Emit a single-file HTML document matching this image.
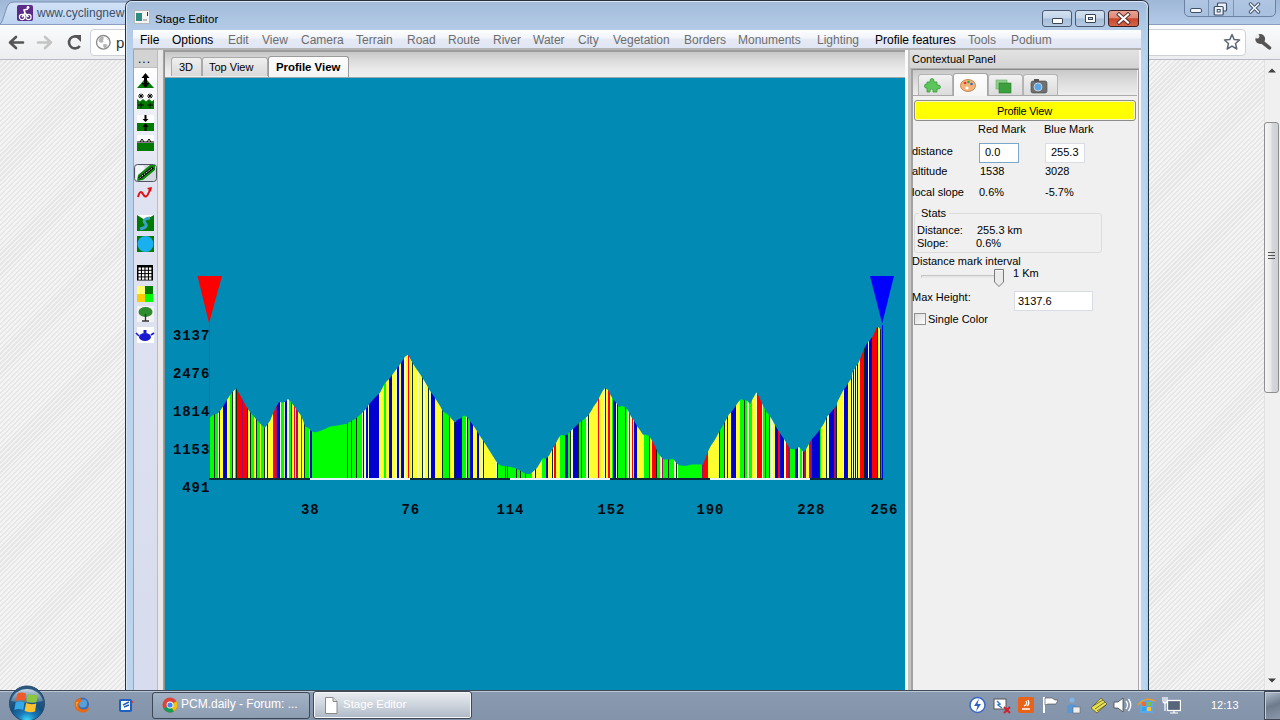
<!DOCTYPE html>
<html><head><meta charset="utf-8">
<style>
*{margin:0;padding:0;box-sizing:border-box}
html,body{width:1280px;height:720px;overflow:hidden;font-family:"Liberation Sans",sans-serif;font-size:12px;color:#000;background:#fff}
.a{position:absolute}
.t{position:absolute;white-space:nowrap;line-height:14px}
/* chrome */
#tabstrip{left:0;top:0;width:1280px;height:25px;background:linear-gradient(#9fb7d6,#b4cbe8)}
#toolbar{left:0;top:24px;width:1280px;height:36px;background:linear-gradient(#fafbfc,#ebedf0);border-top:1px solid #8a9dba;border-bottom:1px solid #b8bcc2}
#content{left:0;top:60px;width:1264px;height:630px;background:repeating-linear-gradient(-45deg,#e6e6e6 0 1.6px,#f4f4f4 1.6px 3.5px)}
#scroll{left:1264px;top:60px;width:16px;height:630px;background:#f0f0f0;border-left:1px solid #e2e2e2}
#omni{left:90px;top:29px;width:1156px;height:27px;background:#fff;border:1px solid #cdd2d8;border-radius:4px}
#taskbar{left:0;top:690px;width:1280px;height:30px;background:linear-gradient(#8a9bb1,#8393a9);border-top:1px solid #404c5c;box-shadow:inset 0 1px 0 #bac6d4}
.tb{position:absolute;top:692px;height:27px;border:1px solid #3d4654;border-radius:3px;background:linear-gradient(#a3b2c5,#8c9cb1)}
.tbt{position:absolute;top:697px;color:#fff;font-size:12px;line-height:14px;white-space:nowrap}
/* window */
#win{left:125px;top:0;width:1024px;height:690px;background:linear-gradient(#a2bbd9 0,#b3cbe7 28px,#bcd3ee 60px,#bdd4ee 100%);border:1px solid #28303c;border-bottom:none;border-radius:7px 7px 0 0}
#winin{left:126px;top:1px;width:1022px;height:689px;border:1px solid #d9e6f5;border-bottom:none;border-radius:6px 6px 0 0}
#menubar{left:133px;top:30px;width:1008px;height:18px;background:linear-gradient(#fcfdfe 0,#f1f4fa 45%,#e5eaf5 50%,#e0e6f3 100%)}
.m{position:absolute;top:33px;line-height:14px;color:#6d6d6d;white-space:nowrap}
.m.e{color:#000}
.wb{position:absolute;top:10px;width:30px;height:17px;border:1px solid #4b5a72;border-radius:3px;background:linear-gradient(#d3e1f1 0,#c3d5ea 48%,#a5bdd9 52%,#b6cbe4 100%)}
#client{left:133px;top:48px;width:1008px;height:642px;background:#f0f0f0;border-top:2px solid #b4b4b4}
.p{font-size:11px}
.cb{position:absolute;border:1px solid #abadb3;background:#fff}
</style></head>
<body>
<!-- ============ CHROME BROWSER BEHIND ============ -->
<div id="tabstrip" class="a"></div>
<svg class="a" style="left:0;top:0" width="160" height="26" viewBox="0 0 160 26"><defs><linearGradient id="tg" x1="0" y1="0" x2="0" y2="1"><stop offset="0" stop-color="#d2e2f7"/><stop offset="1" stop-color="#bcd3f0"/></linearGradient></defs><path d="M-1 25 L1 23 C3 21 6 8 8 5 Q10 2 14 2 L160 2 L160 25 Z" fill="url(#tg)" stroke="#7a90ae" stroke-width="1"/></svg>
<div class="a" style="left:17px;top:5px;width:16px;height:16px;background:#5c2b8a;border-radius:2px"></div>
<svg class="a" style="left:17px;top:5px" width="16" height="16" viewBox="0 0 16 16"><circle cx="5" cy="12" r="2.6" fill="none" stroke="#fff" stroke-width="1.2"/><circle cx="11.5" cy="12" r="2.6" fill="none" stroke="#fff" stroke-width="1.2"/><path d="M5 12 L8 8 L11.5 12 M8 8 L7 5 L11 4" stroke="#fff" stroke-width="1.6" fill="none"/><circle cx="11" cy="2.5" r="1.4" fill="#fff"/></svg>
<div class="t" style="left:37px;top:6px;color:#3d4f6a;font-size:12px">www.cyclingnew</div>
<div id="toolbar" class="a"></div>
<svg class="a" style="left:8px;top:34px" width="80" height="18" viewBox="0 0 80 18">
 <path d="M2 8.5 L8 3 M2 8.5 L8 14 M2 8.5 H15" stroke="#555" stroke-width="2.6" fill="none" stroke-linecap="round"/>
 <path d="M43 8.5 L37 3 M43 8.5 L37 14 M43 8.5 H30" stroke="#c4c4c4" stroke-width="2.6" fill="none" stroke-linecap="round"/>
 <path d="M70.5 3.5 A6 6 0 1 0 71.8 12" stroke="#555" stroke-width="2.6" fill="none"/><path d="M66 1 L73 1 L73 8 Z" fill="#555"/>
</svg>
<div id="omni" class="a"></div>
<svg class="a" style="left:95px;top:34px" width="17" height="17" viewBox="0 0 17 17"><circle cx="8.3" cy="8.3" r="6.8" fill="#fff" stroke="#8c8c8c" stroke-width="1.4"/><path d="M3.5 6 Q4.5 3 7.5 2.6 Q9.5 3 8.6 5 Q7.5 6 8.5 7.5 Q7 9.5 5 8.5 Q3.8 7.5 3.5 6 Z" fill="#b4b4b4"/><path d="M8 10.5 Q10.5 9.5 12.5 11 Q12 13.5 9.5 14.6 Q8 13 8 10.5 Z" fill="#b4b4b4"/><path d="M11 3.5 Q13 4.5 13.8 7 Q12.5 6.5 11 3.5 Z" fill="#c4c4c4"/></svg>
<div class="t" style="left:116px;top:36px;font-size:15px;color:#333">p</div>
<svg class="a" style="left:1223px;top:33px" width="18" height="18" viewBox="0 0 18 18"><path d="M9 1.5 L11.2 6.6 L16.6 7 L12.5 10.5 L13.8 16 L9 13.1 L4.2 16 L5.5 10.5 L1.4 7 L6.8 6.6 Z" fill="#fff" stroke="#5d6775" stroke-width="1.5" stroke-linejoin="round"/></svg>
<svg class="a" style="left:1250px;top:30px" width="26" height="24" viewBox="0 0 26 24"><path d="M11.5 11.5 L19.5 17.8" stroke="#555" stroke-width="3.6" stroke-linecap="round"/><circle cx="10.2" cy="9" r="4.9" fill="#555"/><path d="M4.5 8.2 L8.3 8.6 L9.6 6.2 L7.8 3 Z" fill="#efefef"/></svg>
<div class="a" style="left:1184px;top:-3px;width:92px;height:20px;border:1px solid #6b82a4;border-radius:0 0 5px 5px;background:linear-gradient(#b0c6e3,#a9c0de)"></div>
<div class="a" style="left:1208px;top:0;width:1px;height:16px;background:#7d93b3"></div>
<div class="a" style="left:1233px;top:0;width:1px;height:16px;background:#7d93b3"></div>
<div class="a" style="left:1190px;top:8px;width:12px;height:5px;background:#f4f7fb;border:1px solid #3e4f69;border-radius:2px"></div>
<svg class="a" style="left:1213px;top:2px" width="15" height="14" viewBox="0 0 15 14"><rect x="4.5" y="1" width="9" height="8" rx="1" fill="#eef3f9" stroke="#3e4f69" stroke-width="1.2"/><rect x="1.2" y="4.5" width="9" height="8.5" rx="1" fill="#eef3f9" stroke="#3e4f69" stroke-width="1.2"/><rect x="4.2" y="7.5" width="3" height="2.5" fill="none" stroke="#3e4f69" stroke-width="1"/></svg>
<svg class="a" style="left:1248px;top:2px" width="13" height="12" viewBox="0 0 13 12"><path d="M2.5 2 L10.5 10 M10.5 2 L2.5 10" stroke="#3e4f69" stroke-width="3.4" stroke-linecap="round"/><path d="M2.5 2 L10.5 10 M10.5 2 L2.5 10" stroke="#f4f7fb" stroke-width="1.7" stroke-linecap="round"/></svg>
<div id="content" class="a"></div>
<div id="scroll" class="a"></div>
<svg class="a" style="left:1265px;top:66px" width="14" height="8" viewBox="0 0 14 8"><path d="M3 6.5 L7 2.5 L11 6.5 Z" fill="#404040"/></svg>
<svg class="a" style="left:1265px;top:677px" width="14" height="8" viewBox="0 0 14 8"><path d="M3 1.5 L7 5.5 L11 1.5 Z" fill="#404040"/></svg>
<div class="a" style="left:1264px;top:122px;width:15px;height:271px;border:1px solid #8d8e90;border-radius:3px;background:linear-gradient(90deg,#f6f6f6,#e9e9ea 45%,#d6d7da 55%,#cfd0d3)"></div>
<div class="a" style="left:1268px;top:252px;width:7px;height:1px;background:#555;box-shadow:0 3px 0 #555,0 6px 0 #555"></div>

<!-- ============ TASKBAR ============ -->
<div id="taskbar" class="a"></div>
<svg class="a" style="left:8px;top:684px" width="40" height="38" viewBox="0 0 40 38">
 <defs><radialGradient id="orb" cx="0.5" cy="1" r="0.75"><stop offset="0" stop-color="#3ee0ff"/><stop offset="0.35" stop-color="#1a78b8"/><stop offset="0.7" stop-color="#14507e"/><stop offset="1" stop-color="#2a5a82"/></radialGradient>
 <linearGradient id="gl" x1="0" y1="0" x2="0" y2="1"><stop offset="0" stop-color="#e6eef5" stop-opacity="0.85"/><stop offset="1" stop-color="#9ab6cc" stop-opacity="0.35"/></linearGradient></defs>
 <circle cx="19" cy="19.5" r="17.5" fill="url(#orb)" stroke="#27486c" stroke-width="1"/>
 <path d="M3 17 A16.5 16 0 0 1 35 17 Q19 21 3 17 Z" fill="url(#gl)"/>
 <path d="M9 10 Q13 7.5 18 9.5 L16.8 17 Q12.5 15 8 17 Z" fill="#ee5a2a"/>
 <path d="M19.5 10 Q24 12 30 10 L28.5 18 Q23.5 19.5 18.3 17.5 Z" fill="#8cc63e"/>
 <path d="M7.6 18.5 Q12 16.5 16.5 18.5 L15.2 26 Q10.5 24 6.3 26 Z" fill="#35a8e8"/>
 <path d="M18 19 Q23 21 28.3 19.5 L27 27.5 Q21.5 29 16.6 27 Z" fill="#fcc22e"/>
</svg>
<svg class="a" style="left:72px;top:696px" width="19" height="18" viewBox="0 0 19 18"><circle cx="10" cy="8.5" r="7" fill="#3a6fb8"/><circle cx="11" cy="7.5" r="4" fill="#5aa0d8"/><path d="M3 5 Q1.5 11 5 14.5 Q9 17.5 13.5 16 Q17 14.5 17.5 11 Q15 14 10.5 13.5 Q6 12.5 6.5 8 Q7.5 5.5 10 5.5 Q8 3.5 9 1.5 Q5 2.5 3 5 Z" fill="#e86a12"/><path d="M4 6 Q3.5 10 6 13 Q4 9 6.5 6 Z" fill="#f7a530"/></svg>
<svg class="a" style="left:118px;top:697px" width="16" height="16" viewBox="0 0 16 16"><rect x="1" y="2" width="13" height="13" rx="2" fill="#1f5fbf"/><rect x="3" y="4" width="9" height="9" fill="#fff"/><path d="M5 8 L11 5 M6 10 L11 8" stroke="#1f5fbf" stroke-width="1.5"/><circle cx="14.5" cy="5" r="1" fill="#e33"/></svg>
<div class="tb" style="left:152px;width:158px"></div>
<svg class="a" style="left:162px;top:697px" width="16" height="16" viewBox="0 0 16 16"><circle cx="8" cy="8" r="7.5" fill="#db4437"/><path d="M8 8 L1.5 11.8 A7.5 7.5 0 0 0 12 14.3 Z" fill="#0f9d58"/><path d="M8 8 L12 14.3 A7.5 7.5 0 0 0 14.5 4.2 Z" fill="#f4c20d"/><circle cx="8" cy="8" r="3.4" fill="#fff"/><circle cx="8" cy="8" r="2.6" fill="#4285f4"/></svg>
<div class="tbt" style="left:181px">PCM.daily - Forum: ...</div>
<div class="tb" style="left:313px;top:691px;width:159px;height:28px;background:linear-gradient(#e9ecf0,#cdd4dd 50%,#aeb8c6);border-color:#3f4856;box-shadow:inset 0 0 0 1px #f4f6f8"></div>
<svg class="a" style="left:324px;top:697px" width="14" height="17" viewBox="0 0 14 17"><path d="M1.5 0.5 H9 L13 4.5 V16.5 H1.5 Z" fill="#fff" stroke="#8a8a8a"/><path d="M9 0.5 V4.5 H13" fill="#ddd" stroke="#8a8a8a"/></svg>
<div class="tbt" style="left:343px;font-size:11.5px">Stage Editor</div>
<!-- tray -->
<svg class="a" style="left:969px;top:696px" width="212" height="18" viewBox="0 0 212 18">
 <circle cx="8.5" cy="9" r="7.5" fill="#fff" stroke="#3a66c4" stroke-width="1.5"/><path d="M10 2.5 L5 10 H8.5 L7 15.5 L12 8 H8.5 Z" fill="#2f5fbf"/>
 <rect x="25" y="3" width="12" height="10" fill="#fff" stroke="#555"/><path d="M28 5 L31 8 L29 9 L33 12" stroke="#3b7bd6" stroke-width="1.5" fill="none"/><path d="M35 11 L41 17 M41 11 L35 17" stroke="#d0202a" stroke-width="2"/>
 <rect x="49" y="1" width="16" height="16" rx="2" fill="#e8621a"/><path d="M53 13 H61 M55 10 Q59 8 57 5 M58 10 Q61 8 59 4" stroke="#fff" stroke-width="1.3" fill="none"/>
 <path d="M75 1 V17" stroke="#fff" stroke-width="2"/><path d="M76 2 H83 L86 4 H89 L87 8 H79 L76 9 Z" fill="#fff" stroke="#444" stroke-width="0.6"/>
 <circle cx="103" cy="4" r="2.5" fill="#7fb6e8"/><path d="M98 17 V10 Q103 6 108 10 V17 Z" fill="#5b97d4"/><rect x="104" y="11" width="7" height="6" fill="#eee" stroke="#666" stroke-width="0.6"/>
 <path d="M122 12 L132 2 L138 8 L128 17 Z" fill="#e9e14a" stroke="#555" stroke-width="0.8"/><path d="M124 10 L134 4 M126 13 L136 6 M128 15 L137 9" stroke="#444" stroke-width="0.7"/>
 <path d="M145 6 H149 L154 2 V16 L149 12 H145 Z" fill="#fff" stroke="#444" stroke-width="0.8"/><path d="M157 5 Q160 9 157 13 M159.5 3 Q164 9 159.5 15" stroke="#fff" stroke-width="1.3" fill="none"/>
 <rect x="171" y="3" width="13" height="14" fill="#5fa8e8"/><path d="M173 6 H177 V10 H173 Z" fill="#f06a2a"/><path d="M178 6 H182 V10 H178 Z" fill="#7cc142"/><path d="M173 11 H177 V15 H173 Z" fill="#2fa6e8"/><path d="M178 11 H182 V15 H178 Z" fill="#fec02e"/><path d="M169 9 Q176 0 186 5" stroke="#f39a1e" stroke-width="1.5" fill="none"/>
 <rect x="198.5" y="4.5" width="13" height="10" fill="#56657a" stroke="#fff" stroke-width="1.3"/><path d="M201 17 H209 M205 14.5 V17 M196 1 V15 M194 1 V5 Q194 7 196 7 Q198 7 198 5 V1" stroke="#fff" stroke-width="1.2" fill="none"/>
</svg>
<div class="tbt" style="left:1211px;top:698px;font-size:11px">12:13</div>
<div class="a" style="left:1264px;top:691px;width:16px;height:29px;border:1px solid #3e4856;border-right:none;box-shadow:inset 1px 1px 0 #c4cdd8;background:linear-gradient(160deg,#b4c0ce,#6d7b8e 50%,#8b98aa)"></div>

<!-- ============ STAGE EDITOR WINDOW ============ -->
<div id="win" class="a"></div>
<div id="winin" class="a"></div>
<div class="a" style="left:1146px;top:8px;width:2px;height:682px;background:linear-gradient(90deg,#b4d4ee,#8fd6fa)"></div>
<svg class="a" style="left:134px;top:10px" width="16" height="14" viewBox="0 0 16 14"><rect x="0.5" y="0.5" width="15" height="13" fill="#f4f4f4" stroke="#b8b8b8"/><rect x="2" y="3" width="6" height="8" fill="#2e8c82"/><rect x="9" y="9" width="4" height="2" fill="#bbb"/><rect x="13" y="2" width="1" height="4" fill="#333"/></svg>
<div class="t" style="left:155px;top:11.5px;font-size:11.5px;color:#000">Stage Editor</div>
<div class="wb" style="left:1042px"></div>
<div class="a" style="left:1052px;top:18px;width:11px;height:6px;background:#fff;border:1px solid #3a4457;border-radius:1px"></div>
<div class="wb" style="left:1075px"></div>
<div class="a" style="left:1085px;top:14px;width:11px;height:9px;border:1px solid #3a4457;background:#fff;border-radius:1px"></div>
<div class="a" style="left:1088px;top:17px;width:5px;height:3px;border:1px solid #3a4457;background:#c9d8ea"></div>
<div class="wb" style="left:1108px;width:31px;border-color:#3a1f22;background:linear-gradient(#e8a393 0,#df8a78 45%,#c9452c 52%,#d8664b 100%)"></div>
<svg class="a" style="left:1116px;top:12px" width="15" height="13" viewBox="0 0 15 13"><path d="M3 2.5 L12 10.5 M12 2.5 L3 10.5" stroke="#5a2a22" stroke-width="4" stroke-linecap="square"/><path d="M3 2.5 L12 10.5 M12 2.5 L3 10.5" stroke="#fff" stroke-width="2.2" stroke-linecap="square"/></svg>
<div id="menubar" class="a"></div>
<div class="m e" style="left:140px">File</div>
<div class="m e" style="left:172px">Options</div>
<div class="m" style="left:228px">Edit</div>
<div class="m" style="left:262px">View</div>
<div class="m" style="left:301px">Camera</div>
<div class="m" style="left:356px">Terrain</div>
<div class="m" style="left:407px">Road</div>
<div class="m" style="left:448px">Route</div>
<div class="m" style="left:493px">River</div>
<div class="m" style="left:533px">Water</div>
<div class="m" style="left:578px">City</div>
<div class="m" style="left:613px">Vegetation</div>
<div class="m" style="left:684px">Borders</div>
<div class="m" style="left:738px">Monuments</div>
<div class="m" style="left:817px">Lighting</div>
<div class="m e" style="left:875px">Profile features</div>
<div class="m" style="left:968px">Tools</div>
<div class="m" style="left:1011px">Podium</div>
<div id="client" class="a"></div>
<!-- left tool dock -->
<div class="a" style="left:133px;top:50px;width:25px;height:640px;background:linear-gradient(#ffffff 20px,#eef0f8 60px,#dfe3f1 140px,#d7dcee 100%);border-left:1px solid #a0a4ae;border-right:1px solid #b8bcc4"></div>
<div class="a" style="left:134px;top:50px;width:23px;height:18px;background:#d3d3d3;border-bottom:1px solid #c0c0c0"></div>
<div class="t" style="left:138px;top:52px;font-size:12px;letter-spacing:1px">...</div>
<div class="a" style="left:158px;top:50px;width:7px;height:640px;background:linear-gradient(90deg,#eaeaea 0,#e6e6e6 70%,#a4a4a4 72%,#9c9c9c 100%)"></div>
<svg class="a" style="left:134px;top:69px" width="23" height="280" viewBox="0 0 23 280">
 <!-- 1 mountain up/down -->
 <path d="M3 19 L10 11 H13 L20 19 Z" fill="#007a00"/><path d="M11.5 4 L15.5 9 H13 V14 H15.5 L11.5 19 L7.5 14 H10 V9 H7.5 Z" fill="#000"/>
 <!-- 2 -->
 <rect x="3" y="24" width="17" height="16" fill="#fff"/><path d="M3 30 L6 32.5 L9 30 L12 32.5 L15 30 L18 32.5 L20 30.5 V40 H3 Z" fill="#007a00"/><path d="M4 27 H10 M13 27 H19 M7 24.5 V29.5 M16 24.5 V29.5 M5 25 L9 29 M9 25 L5 29 M14 25 L18 29 M18 25 L14 29 M4 36 H10 M13 36 H19 M7 33.5 V39 M16 33.5 V39" stroke="#000" stroke-width="0.9"/>
 <!-- 3 -->
 <rect x="3" y="46" width="17" height="16" fill="#fff"/><rect x="3" y="54" width="17" height="8" fill="#007a00"/><path d="M11.5 53 L8.5 50 H10.5 V46 H12.5 V50 H14.5 Z M11.5 54 L8.5 58 H10.5 V62 H12.5 V58 H14.5 Z" fill="#000"/>
 <!-- 4 -->
 <rect x="3" y="66" width="17" height="16" fill="#fff"/><rect x="3" y="74" width="17" height="8" fill="#007a00"/><path d="M3 73 H20" stroke="#000"/><path d="M6 73 L8 70 L10 73 M13 73 L15 70 L17 73" stroke="#000" fill="none"/>
 <!-- 5 selected road -->
 <rect x="0.5" y="95.5" width="22" height="17" rx="3" fill="#d4d8e0" stroke="#4e5560"/><rect x="1.5" y="96.5" width="9" height="15" rx="2" fill="#f2f4f8"/><path d="M3 112 L4 106 L16 96 L21 96 L21 101 L9 111 Z" fill="#0a8a0a"/><path d="M5 109.5 L19 98.5" stroke="#000" stroke-width="2.6"/><path d="M5.5 109 L18.5 99" stroke="#fff" stroke-width="1" stroke-dasharray="1.6 1.2"/>
 <!-- 6 red curve -->
 <path d="M4 128 Q6 120 9 125 Q12 131 15 123 L16 120" stroke="#e01010" stroke-width="2" fill="none"/><path d="M13 119 L18 118 L17 123 Z" fill="#e01010"/>
 <!-- 7 river -->
 <rect x="3" y="146" width="17" height="16" fill="#007a00"/><path d="M3 146 L11 151 L20 146 Z" fill="#fff"/><path d="M6 160 Q15 158 11 154 Q8 150 16 149" stroke="#3aa0c8" stroke-width="3" fill="none"/>
 <!-- 8 blue circle -->
 <rect x="3" y="167" width="17" height="16" fill="#007a00"/><circle cx="11.5" cy="175" r="8" fill="#1ab0f0"/>
 <!-- 9 grid -->
 <rect x="3" y="196" width="16" height="15.5" fill="#000"/><rect x="4.5" y="198.5" width="2.4" height="2.3" fill="#fff"/><rect x="4.5" y="201.8" width="2.4" height="2.3" fill="#fff"/><rect x="4.5" y="205.1" width="2.4" height="2.3" fill="#fff"/><rect x="4.5" y="208.4" width="2.4" height="2.3" fill="#fff"/><rect x="8.0" y="198.5" width="2.4" height="2.3" fill="#fff"/><rect x="8.0" y="201.8" width="2.4" height="2.3" fill="#fff"/><rect x="8.0" y="205.1" width="2.4" height="2.3" fill="#fff"/><rect x="8.0" y="208.4" width="2.4" height="2.3" fill="#fff"/><rect x="11.5" y="198.5" width="2.4" height="2.3" fill="#fff"/><rect x="11.5" y="201.8" width="2.4" height="2.3" fill="#fff"/><rect x="11.5" y="205.1" width="2.4" height="2.3" fill="#fff"/><rect x="11.5" y="208.4" width="2.4" height="2.3" fill="#fff"/><rect x="15.0" y="198.5" width="2.4" height="2.3" fill="#fff"/><rect x="15.0" y="201.8" width="2.4" height="2.3" fill="#fff"/><rect x="15.0" y="205.1" width="2.4" height="2.3" fill="#fff"/><rect x="15.0" y="208.4" width="2.4" height="2.3" fill="#fff"/>
 <!-- 10 yellow green squares -->
 <rect x="3" y="217" width="8" height="8" fill="#ffff70"/><rect x="11" y="217" width="8" height="8" fill="#007a00"/><rect x="3" y="225" width="8" height="8" fill="#ffcc00"/><rect x="11" y="225" width="8" height="8" fill="#00ff00"/>
 <!-- 11 tree -->
 <rect x="3" y="237" width="17" height="16" fill="#f2f2f2"/><ellipse cx="11.5" cy="243" rx="7" ry="5" fill="#2e8b2e"/><path d="M11.5 245 V252 M8 252 H15" stroke="#333" stroke-width="1.3"/>
 <!-- 12 teapot -->
 <rect x="3" y="258" width="17" height="16" fill="#fff"/><ellipse cx="11" cy="268" rx="6" ry="4" fill="#1a1ad0"/><path d="M5 267 L2 264 M17 266 L20 264" stroke="#1a1ad0" stroke-width="1.6"/><rect x="9.5" y="261" width="3" height="3" fill="#1a1ad0"/>
</svg>
<!-- view tabs + chart background -->
<div class="a" style="left:164px;top:50px;width:742px;height:640px;background:linear-gradient(#c6c6c6 0,#dadada 8px,#ebebeb 18px,#f0f0f0 26px);border-top:2px solid #9c9c9c;border-left:1px solid #8f8f8f"></div>
<div class="a" style="left:171px;top:57px;width:31px;height:19px;border:1px solid #a9a9a9;border-bottom:none;border-radius:3px 3px 0 0;background:linear-gradient(#f0f0f0,#e4e4e4 50%,#dadada)"></div>
<div class="a" style="left:202px;top:57px;width:66px;height:19px;border:1px solid #a9a9a9;border-bottom:none;border-radius:3px 3px 0 0;background:linear-gradient(#f0f0f0,#e4e4e4 50%,#dadada)"></div>
<div class="a" style="left:268px;top:56px;width:81px;height:22px;border:1px solid #9a9a9a;border-bottom:none;border-radius:3px 3px 0 0;background:linear-gradient(#fdfdfd,#f4f4f4)"></div>
<div class="t p" style="left:179px;top:60px">3D</div>
<div class="t p" style="left:209px;top:60px">Top View</div>
<div class="t" style="left:276px;top:60px;font-weight:bold;font-size:11.4px">Profile View</div>
<div class="a" style="left:165px;top:78px;width:740px;height:612px;background:#008ab4"></div>
<div class="a" style="left:905px;top:50px;width:3px;height:640px;background:#fafafa"></div>
<div class="a" style="left:908px;top:50px;width:3px;height:640px;background:#c4c4c4"></div>
<div class="a" style="left:165px;top:77px;width:740px;height:1px;background:#9aa7ad"></div>
<!-- contextual panel -->
<div class="a" style="left:910px;top:50px;width:229px;height:19px;background:linear-gradient(#e2e2e2,#d4d4d4);border-bottom:1px solid #b0b0b0"></div>
<div class="t p" style="left:912px;top:52px">Contextual Panel</div>
<div class="a" style="left:911px;top:69px;width:228px;height:621px;background:#f0f0f0;border-left:2px solid #a2a2a2;border-top:1px solid #8a8a8a;border-right:1px solid #a8a8a8"></div>
<div class="a" style="left:1139px;top:50px;width:2px;height:640px;background:#f4f6fa"></div>
<div class="a" style="left:913px;top:70px;width:224px;height:26px;background:linear-gradient(#c9c9c9,#dadada 40%,#efefef)"></div>
<div class="a" style="left:913px;top:95px;width:224px;height:1px;background:#a9a9a9"></div>
<div class="a" style="left:918px;top:74px;width:35px;height:21px;border:1px solid #b4b4b4;border-bottom:none;border-radius:3px 3px 0 0;background:linear-gradient(#f2f2f2,#e6e6e6 50%,#dcdcdc)"></div>
<div class="a" style="left:953px;top:73px;width:35px;height:23px;border:1px solid #a4a4a4;border-bottom:none;border-radius:3px 3px 0 0;background:linear-gradient(#fefefe,#f5f5f5)"></div>
<div class="a" style="left:988px;top:74px;width:35px;height:21px;border:1px solid #b4b4b4;border-bottom:none;border-radius:3px 3px 0 0;background:linear-gradient(#f2f2f2,#e6e6e6 50%,#dcdcdc)"></div>
<div class="a" style="left:1023px;top:74px;width:35px;height:21px;border:1px solid #b4b4b4;border-bottom:none;border-radius:3px 3px 0 0;background:linear-gradient(#f2f2f2,#e6e6e6 50%,#dcdcdc)"></div>
<svg class="a" style="left:924px;top:77px" width="140" height="17" viewBox="0 0 140 17">
 <path d="M3 5 H6 Q5.5 1.5 8 1.5 Q10.5 1.5 10 5 H13 V8 Q16.5 7.5 16.5 10 Q16.5 12.5 13 12 V15 H9 Q9.5 12 7.5 12 Q5.5 12 6 15 H3 V11 Q0.5 11.5 0.5 9 Q0.5 6.5 3 7 Z" fill="#5cc65c" stroke="#3a9a3a" stroke-width="0.8"/>
 <ellipse cx="44" cy="8.5" rx="7.5" ry="6" fill="#f3b47a" stroke="#b8743a" stroke-width="0.8"/><circle cx="41" cy="6" r="1.3" fill="#e33"/><circle cx="44.5" cy="5" r="1.3" fill="#3a3"/><circle cx="47.5" cy="7" r="1.3" fill="#36c"/><circle cx="43" cy="11" r="1.6" fill="#fff"/>
 <rect x="72" y="3" width="11" height="9" fill="#8fd08f" stroke="#6aa86a" stroke-width="0.6"/><rect x="75" y="6" width="12" height="10" fill="#3ca03c" stroke="#2a7a2a" stroke-width="0.6"/>
 <rect x="107" y="4" width="16" height="12" rx="2" fill="#6e7073" stroke="#444" stroke-width="0.6"/><rect x="110" y="2" width="5" height="3" fill="#555"/><circle cx="114" cy="10" r="4" fill="#5aa6e8" stroke="#ddd" stroke-width="0.8"/>
</svg>
<div class="a" style="left:914px;top:100px;width:222px;height:21px;border:1px solid #8c8c8c;border-radius:3px;background:#ffff00;box-shadow:inset 0 0 0 1px #f8f8c8"></div>
<div class="t p" style="left:997px;top:104px;letter-spacing:-0.25px">Profile View</div>
<div class="t p" style="left:978px;top:122px">Red Mark</div>
<div class="t p" style="left:1044px;top:122px">Blue Mark</div>
<div class="t p" style="left:912px;top:144px">distance</div>
<div class="cb" style="left:979px;top:143px;width:40px;height:20px;border-color:#7ea6c8"></div>
<div class="t p" style="left:985px;top:145px">0.0</div>
<div class="cb" style="left:1045px;top:143px;width:40px;height:20px;border-color:#dadce3"></div>
<div class="t p" style="left:1051px;top:145px">255.3</div>
<div class="t p" style="left:912px;top:164px">altitude</div>
<div class="t p" style="left:980px;top:164px">1538</div>
<div class="t p" style="left:1045px;top:164px">3028</div>
<div class="t p" style="left:912px;top:185px">local slope</div>
<div class="t p" style="left:979px;top:185px">0.6%</div>
<div class="t p" style="left:1045px;top:185px">-5.7%</div>
<div class="a" style="left:914px;top:213px;width:188px;height:40px;border:1px solid #dcdcdc;border-radius:3px"></div>
<div class="a" style="left:919px;top:206px;width:30px;height:14px;background:#f0f0f0"></div>
<div class="t p" style="left:921px;top:206px">Stats</div>
<div class="t p" style="left:917px;top:223px">Distance:</div>
<div class="t p" style="left:977px;top:223px">255.3 km</div>
<div class="t p" style="left:917px;top:236px">Slope:</div>
<div class="t p" style="left:976px;top:236px">0.6%</div>
<div class="t p" style="left:912px;top:254px">Distance mark interval</div>
<div class="a" style="left:921px;top:275px;width:80px;height:3px;border:1px solid #c4c4c4;border-bottom-color:#e8e8e8;background:#e6e6e6"></div>
<svg class="a" style="left:993px;top:268px" width="12" height="20" viewBox="0 0 12 20"><path d="M1.5 1.5 H10.5 V14 L6 18.5 L1.5 14 Z" fill="#ebebeb" stroke="#7a7a7a"/><path d="M2.5 2.5 H9.5" stroke="#fff"/></svg>
<div class="t p" style="left:1013px;top:266px">1 Km</div>
<div class="t p" style="left:912px;top:290px">Max Height:</div>
<div class="cb" style="left:1014px;top:291px;width:79px;height:20px;border-color:#dadce3"></div>
<div class="t p" style="left:1018px;top:294px">3137.6</div>
<div class="a" style="left:914px;top:313px;width:12px;height:12px;border:1px solid #8e8f8f;background:linear-gradient(135deg,#dcdcdc,#fdfdfd)"></div>
<div class="t p" style="left:928px;top:312px">Single Color</div>
<svg class="a" style="left:0;top:0" width="1280" height="720" viewBox="0 0 1280 720" shape-rendering="crispEdges">
<defs><clipPath id="pc"><polygon points="210,478 209.9,417.5 213.3,414.7 218.2,413.3 220.3,410.5 223.0,406.4 226.5,400.8 230.0,395.3 232.8,391.8 236.2,388.3 237.6,391.0 241.8,398.0 247.4,408.5 251.0,413.3 256.0,419.0 261.0,424.4 264.7,428.0 267.5,424.4 270.3,420.3 273.0,413.5 276.0,407.0 279.0,402.0 282.0,402.6 285.0,402.0 288.0,399.0 291.0,402.0 294.0,406.0 297.0,410.6 300.0,414.0 303.0,420.0 305.0,426.6 308.0,427.4 311.0,431.0 315.0,432.5 320.0,431.0 325.0,429.0 330.0,426.6 335.0,426.0 340.0,425.0 347.0,423.7 350.0,421.8 355.0,419.0 360.0,415.0 365.0,410.0 370.0,403.0 375.0,397.5 380.0,392.7 385.0,383.0 390.0,378.0 395.0,371.0 400.0,364.5 405.0,356.7 408.0,354.7 410.0,358.6 415.0,367.0 420.0,374.0 425.0,382.0 430.0,390.8 435.0,398.0 440.0,406.0 443.0,411.5 447.0,414.0 450.0,417.0 455.0,422.7 457.0,420.0 460.0,418.7 464.0,415.5 467.0,417.0 470.0,421.0 475.0,428.0 480.0,436.0 485.0,443.5 490.0,451.5 495.0,459.5 498.0,464.0 502.0,466.0 508.0,466.6 515.0,468.0 518.0,469.6 522.0,471.8 526.0,474.0 530.0,474.0 533.0,471.8 537.0,468.0 540.0,463.0 543.0,458.0 546.0,458.7 549.0,455.8 552.0,450.0 555.0,445.0 558.0,439.0 561.0,434.7 564.0,435.4 567.0,434.7 570.0,431.7 573.0,428.8 576.0,426.0 579.0,423.0 582.0,420.8 585.0,418.6 588.0,415.7 591.0,411.3 594.0,406.0 597.0,401.9 600.0,396.0 603.0,390.2 605.0,388.0 608.0,390.0 611.0,396.0 613.0,399.0 616.0,402.6 619.0,407.0 622.0,406.0 625.0,407.0 628.0,410.6 631.0,416.4 634.0,420.8 637.0,426.0 640.0,430.3 643.0,434.7 646.0,434.7 649.0,436.0 652.0,440.5 655.0,446.3 658.0,453.0 661.0,457.0 664.0,459.4 667.0,459.4 670.0,459.4 673.0,458.7 676.0,462.4 679.0,465.3 685.0,466.0 692.0,464.5 700.0,464.5 703.0,464.5 706.0,457.0 708.0,451.4 711.0,445.6 714.0,441.2 717.0,436.0 720.0,430.3 723.0,425.2 726.0,420.0 729.0,414.3 732.0,411.3 735.0,407.0 738.0,402.6 741.0,399.0 744.0,400.4 747.0,400.4 750.0,404.0 753.0,398.2 756.0,393.0 757.0,392.4 760.0,399.0 763.0,405.5 766.0,411.3 769.0,415.0 772.0,419.4 775.0,425.0 778.0,430.3 781.0,434.7 784.0,439.0 787.0,444.0 790.0,448.5 793.0,449.2 796.0,449.2 799.0,447.0 800.0,448.0 803.0,451.8 805.0,450.9 807.0,447.5 810.0,442.0 812.0,439.0 815.0,435.8 818.0,431.9 821.0,428.0 824.0,423.6 827.0,416.7 830.0,413.3 835.0,407.5 836.5,406.0 837.5,401.7 840.0,396.7 843.0,390.8 846.0,386.7 849.0,381.7 851.5,378.3 852.5,372.5 855.0,368.3 857.0,365.0 859.0,361.7 861.0,356.7 864.0,348.9 867.0,343.3 870.0,340.0 873.0,336.0 876.0,328.9 878.0,326.7 880.0,328.9 882.0,330.5 883,478"/></clipPath></defs>
<g clip-path="url(#pc)">
<rect x="210" y="320" width="4" height="158" fill="#00ff00"/>
<rect x="214" y="320" width="1" height="158" fill="#0a2a14"/>
<rect x="215" y="320" width="3" height="158" fill="#00ff00"/>
<rect x="218" y="320" width="1" height="158" fill="#eaffc0"/>
<rect x="219" y="320" width="1" height="158" fill="#0a2a14"/>
<rect x="220" y="320" width="3" height="158" fill="#ffff30"/>
<rect x="223" y="320" width="4" height="158" fill="#0000d0"/>
<rect x="227" y="320" width="1" height="158" fill="#eaffc0"/>
<rect x="228" y="320" width="2" height="158" fill="#ffff30"/>
<rect x="230" y="320" width="2" height="158" fill="#00ff00"/>
<rect x="232" y="320" width="1" height="158" fill="#0a2a14"/>
<rect x="233" y="320" width="2" height="158" fill="#eaffc0"/>
<rect x="235" y="320" width="1" height="158" fill="#00ff00"/>
<rect x="236" y="320" width="1" height="158" fill="#0a2a14"/>
<rect x="237" y="320" width="5" height="158" fill="#ff0000"/>
<rect x="242" y="320" width="1" height="158" fill="#a0106a"/>
<rect x="243" y="320" width="4" height="158" fill="#ff0000"/>
<rect x="247" y="320" width="1" height="158" fill="#0a2a14"/>
<rect x="248" y="320" width="2" height="158" fill="#ffff30"/>
<rect x="250" y="320" width="1" height="158" fill="#0a2a14"/>
<rect x="251" y="320" width="3" height="158" fill="#00ff00"/>
<rect x="254" y="320" width="2" height="158" fill="#ffff30"/>
<rect x="256" y="320" width="1" height="158" fill="#0a2a14"/>
<rect x="257" y="320" width="3" height="158" fill="#00ff00"/>
<rect x="260" y="320" width="1" height="158" fill="#ffff30"/>
<rect x="261" y="320" width="3" height="158" fill="#00ff00"/>
<rect x="264" y="320" width="1" height="158" fill="#0a2a14"/>
<rect x="265" y="320" width="2" height="158" fill="#eaffc0"/>
<rect x="267" y="320" width="1" height="158" fill="#0a2a14"/>
<rect x="268" y="320" width="1" height="158" fill="#ffff30"/>
<rect x="269" y="320" width="1" height="158" fill="#eaffc0"/>
<rect x="270" y="320" width="3" height="158" fill="#ffff30"/>
<rect x="273" y="320" width="3" height="158" fill="#ff0000"/>
<rect x="276" y="320" width="1" height="158" fill="#a0106a"/>
<rect x="277" y="320" width="3" height="158" fill="#0000d0"/>
<rect x="280" y="320" width="1" height="158" fill="#eaffc0"/>
<rect x="281" y="320" width="3" height="158" fill="#00ff00"/>
<rect x="284" y="320" width="1" height="158" fill="#eaffc0"/>
<rect x="285" y="320" width="2" height="158" fill="#0000d0"/>
<rect x="287" y="320" width="2" height="158" fill="#eaffc0"/>
<rect x="289" y="320" width="2" height="158" fill="#00ff00"/>
<rect x="291" y="320" width="1" height="158" fill="#0a2a14"/>
<rect x="292" y="320" width="2" height="158" fill="#ffff30"/>
<rect x="294" y="320" width="1" height="158" fill="#ff0000"/>
<rect x="295" y="320" width="1" height="158" fill="#eaffc0"/>
<rect x="296" y="320" width="2" height="158" fill="#a0106a"/>
<rect x="298" y="320" width="3" height="158" fill="#ffff30"/>
<rect x="301" y="320" width="1" height="158" fill="#ff0000"/>
<rect x="302" y="320" width="2" height="158" fill="#ffff30"/>
<rect x="304" y="320" width="1" height="158" fill="#0a2a14"/>
<rect x="305" y="320" width="4" height="158" fill="#00ff00"/>
<rect x="309" y="320" width="1" height="158" fill="#eaffc0"/>
<rect x="310" y="320" width="2" height="158" fill="#0000d0"/>
<rect x="312" y="320" width="35" height="158" fill="#00ff00"/>
<rect x="347" y="320" width="1" height="158" fill="#0a2a14"/>
<rect x="348" y="320" width="3" height="158" fill="#00ff00"/>
<rect x="351" y="320" width="1" height="158" fill="#0a2a14"/>
<rect x="352" y="320" width="4" height="158" fill="#00ff00"/>
<rect x="356" y="320" width="1" height="158" fill="#0a2a14"/>
<rect x="357" y="320" width="5" height="158" fill="#00ff00"/>
<rect x="362" y="320" width="1" height="158" fill="#eaffc0"/>
<rect x="363" y="320" width="1" height="158" fill="#0000d0"/>
<rect x="364" y="320" width="2" height="158" fill="#eaffc0"/>
<rect x="366" y="320" width="2" height="158" fill="#0000d0"/>
<rect x="368" y="320" width="1" height="158" fill="#eaffc0"/>
<rect x="369" y="320" width="10" height="158" fill="#0000d0"/>
<rect x="379" y="320" width="5" height="158" fill="#ffff30"/>
<rect x="384" y="320" width="2" height="158" fill="#00ff00"/>
<rect x="386" y="320" width="3" height="158" fill="#ffff30"/>
<rect x="389" y="320" width="3" height="158" fill="#0000d0"/>
<rect x="392" y="320" width="3" height="158" fill="#ffff30"/>
<rect x="395" y="320" width="2" height="158" fill="#eaffc0"/>
<rect x="397" y="320" width="2" height="158" fill="#0000d0"/>
<rect x="399" y="320" width="2" height="158" fill="#ffff30"/>
<rect x="401" y="320" width="3" height="158" fill="#0000d0"/>
<rect x="404" y="320" width="2" height="158" fill="#eaffc0"/>
<rect x="406" y="320" width="2" height="158" fill="#ffff30"/>
<rect x="408" y="320" width="1" height="158" fill="#ff0000"/>
<rect x="409" y="320" width="3" height="158" fill="#ffff30"/>
<rect x="412" y="320" width="1" height="158" fill="#0a2a14"/>
<rect x="413" y="320" width="4" height="158" fill="#ffff30"/>
<rect x="417" y="320" width="2" height="158" fill="#eaffc0"/>
<rect x="419" y="320" width="3" height="158" fill="#ffff30"/>
<rect x="422" y="320" width="1" height="158" fill="#0a2a14"/>
<rect x="423" y="320" width="2" height="158" fill="#eaffc0"/>
<rect x="425" y="320" width="3" height="158" fill="#ffff30"/>
<rect x="428" y="320" width="1" height="158" fill="#0a2a14"/>
<rect x="429" y="320" width="2" height="158" fill="#eaffc0"/>
<rect x="431" y="320" width="4" height="158" fill="#0000d0"/>
<rect x="435" y="320" width="7" height="158" fill="#ffff30"/>
<rect x="442" y="320" width="1" height="158" fill="#0a2a14"/>
<rect x="443" y="320" width="6" height="158" fill="#00ff00"/>
<rect x="449" y="320" width="1" height="158" fill="#0a2a14"/>
<rect x="450" y="320" width="4" height="158" fill="#ffff30"/>
<rect x="454" y="320" width="1" height="158" fill="#0a2a14"/>
<rect x="455" y="320" width="7" height="158" fill="#0000d0"/>
<rect x="462" y="320" width="4" height="158" fill="#00ff00"/>
<rect x="466" y="320" width="1" height="158" fill="#eaffc0"/>
<rect x="467" y="320" width="1" height="158" fill="#0a2a14"/>
<rect x="468" y="320" width="2" height="158" fill="#00ff00"/>
<rect x="470" y="320" width="3" height="158" fill="#0000d0"/>
<rect x="473" y="320" width="1" height="158" fill="#eaffc0"/>
<rect x="474" y="320" width="3" height="158" fill="#ffff30"/>
<rect x="477" y="320" width="2" height="158" fill="#0000d0"/>
<rect x="479" y="320" width="2" height="158" fill="#ffff30"/>
<rect x="481" y="320" width="2" height="158" fill="#eaffc0"/>
<rect x="483" y="320" width="1" height="158" fill="#0a2a14"/>
<rect x="484" y="320" width="12" height="158" fill="#ffff30"/>
<rect x="496" y="320" width="1" height="158" fill="#eaffc0"/>
<rect x="497" y="320" width="1" height="158" fill="#0a2a14"/>
<rect x="498" y="320" width="7" height="158" fill="#00ff00"/>
<rect x="505" y="320" width="1" height="158" fill="#0a2a14"/>
<rect x="506" y="320" width="1" height="158" fill="#00ff00"/>
<rect x="507" y="320" width="1" height="158" fill="#0a2a14"/>
<rect x="508" y="320" width="8" height="158" fill="#00ff00"/>
<rect x="516" y="320" width="1" height="158" fill="#0a2a14"/>
<rect x="517" y="320" width="3" height="158" fill="#00ff00"/>
<rect x="520" y="320" width="1" height="158" fill="#0a2a14"/>
<rect x="521" y="320" width="4" height="158" fill="#00ff00"/>
<rect x="525" y="320" width="1" height="158" fill="#0a2a14"/>
<rect x="526" y="320" width="6" height="158" fill="#00ff00"/>
<rect x="532" y="320" width="2" height="158" fill="#ffff30"/>
<rect x="534" y="320" width="1" height="158" fill="#eaffc0"/>
<rect x="535" y="320" width="1" height="158" fill="#0a2a14"/>
<rect x="536" y="320" width="6" height="158" fill="#ffff30"/>
<rect x="542" y="320" width="4" height="158" fill="#00ff00"/>
<rect x="546" y="320" width="2" height="158" fill="#0000d0"/>
<rect x="548" y="320" width="4" height="158" fill="#ffff30"/>
<rect x="552" y="320" width="1" height="158" fill="#0a2a14"/>
<rect x="553" y="320" width="1" height="158" fill="#eaffc0"/>
<rect x="554" y="320" width="2" height="158" fill="#ff0000"/>
<rect x="556" y="320" width="4" height="158" fill="#ffff30"/>
<rect x="560" y="320" width="5" height="158" fill="#00ff00"/>
<rect x="565" y="320" width="1" height="158" fill="#0a2a14"/>
<rect x="566" y="320" width="1" height="158" fill="#0000d0"/>
<rect x="567" y="320" width="1" height="158" fill="#0a2a14"/>
<rect x="568" y="320" width="2" height="158" fill="#00ff00"/>
<rect x="570" y="320" width="1" height="158" fill="#0a2a14"/>
<rect x="571" y="320" width="2" height="158" fill="#eaffc0"/>
<rect x="573" y="320" width="1" height="158" fill="#0a2a14"/>
<rect x="574" y="320" width="4" height="158" fill="#0000d0"/>
<rect x="578" y="320" width="1" height="158" fill="#0a2a14"/>
<rect x="579" y="320" width="2" height="158" fill="#00ff00"/>
<rect x="581" y="320" width="1" height="158" fill="#0a2a14"/>
<rect x="582" y="320" width="4" height="158" fill="#00ff00"/>
<rect x="586" y="320" width="2" height="158" fill="#eaffc0"/>
<rect x="588" y="320" width="1" height="158" fill="#0a2a14"/>
<rect x="589" y="320" width="9" height="158" fill="#ffff30"/>
<rect x="598" y="320" width="1" height="158" fill="#ff0000"/>
<rect x="599" y="320" width="5" height="158" fill="#ffff30"/>
<rect x="604" y="320" width="1" height="158" fill="#eaffc0"/>
<rect x="605" y="320" width="1" height="158" fill="#0a2a14"/>
<rect x="606" y="320" width="2" height="158" fill="#ffff30"/>
<rect x="608" y="320" width="2" height="158" fill="#ff0000"/>
<rect x="610" y="320" width="2" height="158" fill="#ffff30"/>
<rect x="612" y="320" width="1" height="158" fill="#00ff00"/>
<rect x="613" y="320" width="3" height="158" fill="#0000d0"/>
<rect x="616" y="320" width="1" height="158" fill="#eaffc0"/>
<rect x="617" y="320" width="1" height="158" fill="#0a2a14"/>
<rect x="618" y="320" width="7" height="158" fill="#00ff00"/>
<rect x="625" y="320" width="1" height="158" fill="#0a2a14"/>
<rect x="626" y="320" width="1" height="158" fill="#00ff00"/>
<rect x="627" y="320" width="2" height="158" fill="#eaffc0"/>
<rect x="629" y="320" width="1" height="158" fill="#ff0000"/>
<rect x="630" y="320" width="2" height="158" fill="#eaffc0"/>
<rect x="632" y="320" width="1" height="158" fill="#ff0000"/>
<rect x="633" y="320" width="1" height="158" fill="#eaffc0"/>
<rect x="634" y="320" width="3" height="158" fill="#0000d0"/>
<rect x="637" y="320" width="6" height="158" fill="#ffff30"/>
<rect x="643" y="320" width="1" height="158" fill="#eaffc0"/>
<rect x="644" y="320" width="5" height="158" fill="#00ff00"/>
<rect x="649" y="320" width="1" height="158" fill="#0a2a14"/>
<rect x="650" y="320" width="2" height="158" fill="#ffff30"/>
<rect x="652" y="320" width="4" height="158" fill="#ff0000"/>
<rect x="656" y="320" width="1" height="158" fill="#0a2a14"/>
<rect x="657" y="320" width="3" height="158" fill="#00ff00"/>
<rect x="660" y="320" width="2" height="158" fill="#eaffc0"/>
<rect x="662" y="320" width="1" height="158" fill="#a0106a"/>
<rect x="663" y="320" width="5" height="158" fill="#00ff00"/>
<rect x="668" y="320" width="1" height="158" fill="#0a2a14"/>
<rect x="669" y="320" width="5" height="158" fill="#00ff00"/>
<rect x="674" y="320" width="2" height="158" fill="#eaffc0"/>
<rect x="676" y="320" width="1" height="158" fill="#0a2a14"/>
<rect x="677" y="320" width="1" height="158" fill="#eaffc0"/>
<rect x="678" y="320" width="24" height="158" fill="#00ff00"/>
<rect x="702" y="320" width="1" height="158" fill="#a0106a"/>
<rect x="703" y="320" width="5" height="158" fill="#ff0000"/>
<rect x="708" y="320" width="11" height="158" fill="#ffff30"/>
<rect x="719" y="320" width="1" height="158" fill="#0a2a14"/>
<rect x="720" y="320" width="4" height="158" fill="#00ff00"/>
<rect x="724" y="320" width="1" height="158" fill="#0a2a14"/>
<rect x="725" y="320" width="2" height="158" fill="#ffff30"/>
<rect x="727" y="320" width="1" height="158" fill="#0a2a14"/>
<rect x="728" y="320" width="3" height="158" fill="#ffff30"/>
<rect x="731" y="320" width="1" height="158" fill="#0a2a14"/>
<rect x="732" y="320" width="4" height="158" fill="#0000d0"/>
<rect x="736" y="320" width="4" height="158" fill="#ffff30"/>
<rect x="740" y="320" width="4" height="158" fill="#00ff00"/>
<rect x="744" y="320" width="1" height="158" fill="#0a2a14"/>
<rect x="745" y="320" width="2" height="158" fill="#00ff00"/>
<rect x="747" y="320" width="2" height="158" fill="#eaffc0"/>
<rect x="749" y="320" width="3" height="158" fill="#00ff00"/>
<rect x="752" y="320" width="4" height="158" fill="#ffff30"/>
<rect x="756" y="320" width="1" height="158" fill="#eaffc0"/>
<rect x="757" y="320" width="5" height="158" fill="#ff0000"/>
<rect x="762" y="320" width="1" height="158" fill="#eaffc0"/>
<rect x="763" y="320" width="2" height="158" fill="#00ff00"/>
<rect x="765" y="320" width="1" height="158" fill="#0000d0"/>
<rect x="766" y="320" width="3" height="158" fill="#00ff00"/>
<rect x="769" y="320" width="1" height="158" fill="#0a2a14"/>
<rect x="770" y="320" width="3" height="158" fill="#eaffc0"/>
<rect x="773" y="320" width="2" height="158" fill="#ffff30"/>
<rect x="775" y="320" width="3" height="158" fill="#0000d0"/>
<rect x="778" y="320" width="2" height="158" fill="#ff0000"/>
<rect x="780" y="320" width="4" height="158" fill="#0000d0"/>
<rect x="784" y="320" width="2" height="158" fill="#eaffc0"/>
<rect x="786" y="320" width="2" height="158" fill="#ff0000"/>
<rect x="788" y="320" width="2" height="158" fill="#a0106a"/>
<rect x="790" y="320" width="5" height="158" fill="#00ff00"/>
<rect x="795" y="320" width="1" height="158" fill="#0a2a14"/>
<rect x="796" y="320" width="2" height="158" fill="#0000d0"/>
<rect x="798" y="320" width="2" height="158" fill="#eaffc0"/>
<rect x="800" y="320" width="2" height="158" fill="#00ff00"/>
<rect x="802" y="320" width="1" height="158" fill="#eaffc0"/>
<rect x="803" y="320" width="1" height="158" fill="#0a2a14"/>
<rect x="804" y="320" width="2" height="158" fill="#a0106a"/>
<rect x="806" y="320" width="3" height="158" fill="#ffff30"/>
<rect x="809" y="320" width="1" height="158" fill="#ff0000"/>
<rect x="810" y="320" width="2" height="158" fill="#a0106a"/>
<rect x="812" y="320" width="8" height="158" fill="#0000d0"/>
<rect x="820" y="320" width="1" height="158" fill="#00ff00"/>
<rect x="821" y="320" width="5" height="158" fill="#ffff30"/>
<rect x="826" y="320" width="1" height="158" fill="#0a2a14"/>
<rect x="827" y="320" width="2" height="158" fill="#eaffc0"/>
<rect x="829" y="320" width="5" height="158" fill="#0000d0"/>
<rect x="834" y="320" width="2" height="158" fill="#a0106a"/>
<rect x="836" y="320" width="1" height="158" fill="#0a2a14"/>
<rect x="837" y="320" width="6" height="158" fill="#ffff30"/>
<rect x="843" y="320" width="1" height="158" fill="#eaffc0"/>
<rect x="844" y="320" width="3" height="158" fill="#0000d0"/>
<rect x="847" y="320" width="1" height="158" fill="#0a2a14"/>
<rect x="848" y="320" width="3" height="158" fill="#ffff30"/>
<rect x="851" y="320" width="1" height="158" fill="#0a2a14"/>
<rect x="852" y="320" width="1" height="158" fill="#eaffc0"/>
<rect x="853" y="320" width="1" height="158" fill="#0a2a14"/>
<rect x="854" y="320" width="1" height="158" fill="#eaffc0"/>
<rect x="855" y="320" width="1" height="158" fill="#0a2a14"/>
<rect x="856" y="320" width="1" height="158" fill="#eaffc0"/>
<rect x="857" y="320" width="1" height="158" fill="#0a2a14"/>
<rect x="858" y="320" width="2" height="158" fill="#ffff30"/>
<rect x="860" y="320" width="4" height="158" fill="#ff0000"/>
<rect x="864" y="320" width="1" height="158" fill="#0a2a14"/>
<rect x="865" y="320" width="3" height="158" fill="#0000d0"/>
<rect x="868" y="320" width="1" height="158" fill="#eaffc0"/>
<rect x="869" y="320" width="3" height="158" fill="#0000d0"/>
<rect x="872" y="320" width="5" height="158" fill="#ff0000"/>
<rect x="877" y="320" width="1" height="158" fill="#0a2a14"/>
<rect x="878" y="320" width="2" height="158" fill="#ffff30"/>
<rect x="880" y="320" width="1" height="158" fill="#0a2a14"/>
</g>
<rect x="209" y="478" width="101" height="2" fill="#0b2a38"/>
<rect x="310" y="478" width="100" height="2" fill="#e8f4ff"/>
<rect x="410" y="478" width="100" height="2" fill="#0b2a38"/>
<rect x="510" y="478" width="100" height="2" fill="#e8f4ff"/>
<rect x="610" y="478" width="100" height="2" fill="#0b2a38"/>
<rect x="710" y="478" width="100" height="2" fill="#e8f4ff"/>
<rect x="810" y="478" width="73" height="2" fill="#0b2a38"/>
<rect x="209" y="322" width="1" height="156" fill="#a03c3c"/>
<rect x="882" y="325" width="1" height="153" fill="#0000ff"/>
</svg>
<svg class="a" style="left:0;top:0" width="1280" height="720" viewBox="0 0 1280 720"><polygon points="197.5,276 222,276 209,323" fill="#ff0000"/><polygon points="870,276 894,276 882.2,323.5" fill="#0000ff"/><text x="173" y="340" font-family="Liberation Mono" font-weight="bold" font-size="14" letter-spacing="0.9" fill="#000a10">3137</text><text x="173" y="378" font-family="Liberation Mono" font-weight="bold" font-size="14" letter-spacing="0.9" fill="#000a10">2476</text><text x="173" y="416" font-family="Liberation Mono" font-weight="bold" font-size="14" letter-spacing="0.9" fill="#000a10">1814</text><text x="173" y="454" font-family="Liberation Mono" font-weight="bold" font-size="14" letter-spacing="0.9" fill="#000a10">1153</text><text x="182.3" y="492" font-family="Liberation Mono" font-weight="bold" font-size="14" letter-spacing="0.9" fill="#000a10">491</text><text x="301" y="514" font-family="Liberation Mono" font-weight="bold" font-size="14" letter-spacing="0.9" fill="#000a10">38</text><text x="401.5" y="514" font-family="Liberation Mono" font-weight="bold" font-size="14" letter-spacing="0.9" fill="#000a10">76</text><text x="496.5" y="514" font-family="Liberation Mono" font-weight="bold" font-size="14" letter-spacing="0.9" fill="#000a10">114</text><text x="597.5" y="514" font-family="Liberation Mono" font-weight="bold" font-size="14" letter-spacing="0.9" fill="#000a10">152</text><text x="696.5" y="514" font-family="Liberation Mono" font-weight="bold" font-size="14" letter-spacing="0.9" fill="#000a10">190</text><text x="797.3" y="514" font-family="Liberation Mono" font-weight="bold" font-size="14" letter-spacing="0.9" fill="#000a10">228</text><text x="870.4" y="514" font-family="Liberation Mono" font-weight="bold" font-size="14" letter-spacing="0.9" fill="#000a10">256</text></svg>
</body></html>
